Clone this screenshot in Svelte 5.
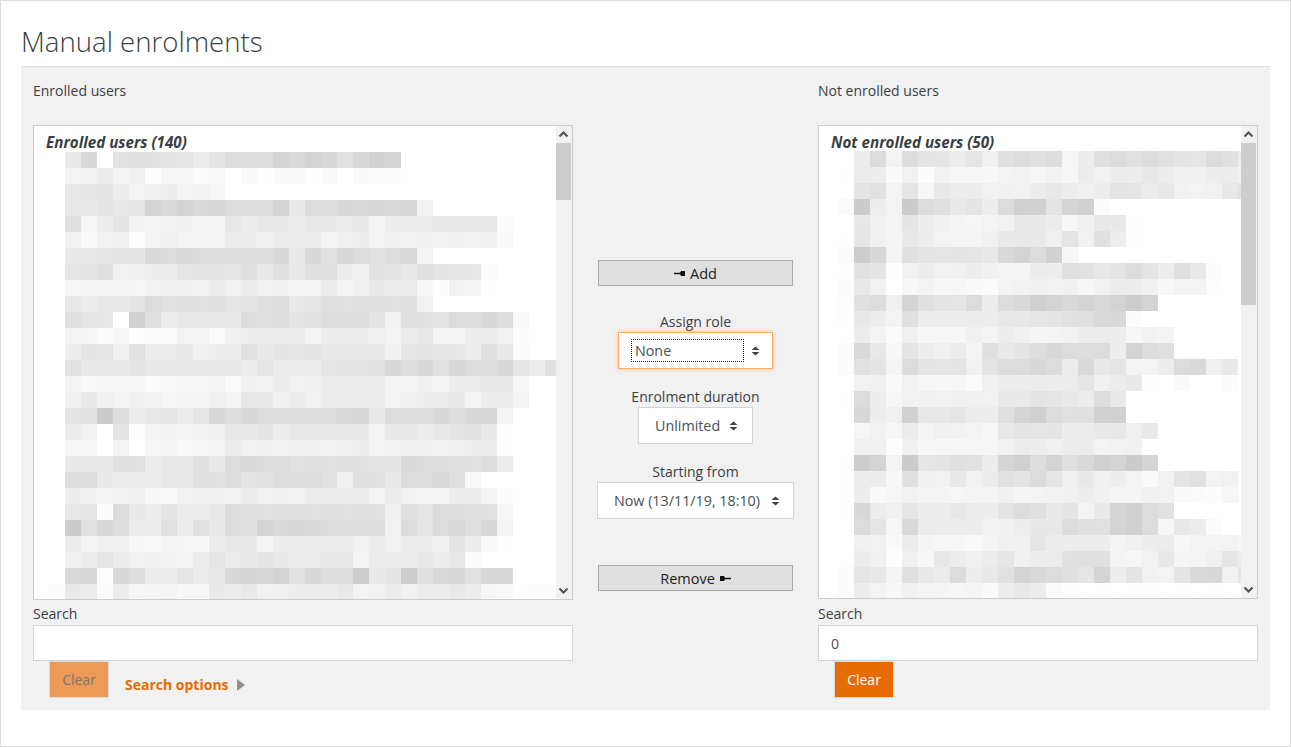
<script>
  const scale = { '0':'#cc','1':'#d0','2':'#d4','3':'#d8','4':'#dc','5':'#e0','6':'#e4','7':'#e8','8':'#ec','9':'#f0','a':'#f3','b':'#f6','c':'#f9','d':'#fc','e':'#fe','f':'#ff' };
  const tint = [[0,0,0],[1,0,-1],[0,1,1],[-1,0,1],[0,0,1],[1,1,0],[0,1,0]];
  function toCells(rows) {
    return rows.map((row, r) =>
      [...row].map((ch, i) => {
        const g = parseInt(scale[ch].slice(1), 16);
        const t = tint[(r * 3 + i * 5) % tint.length];
        const clamp = (v) => Math.min(255, v);
        return `rgb(${clamp(g + t[0])},${clamp(g + t[1])},${clamp(g + t[2])})`;
      })
    );
  }
  const leftRows = [
    'f73f5556686'+'4442323531'+'2e',
    'fa98a9dbbcc'+'fcdccdcfcc'+'d',
    'f7668a98a9b',
    'f7767623233'+'4442744333'+'339',
    'f5b869a99aa'+'787787787a'+'8887777c',
    'f9c99da9aaa'+'889888a98a'+'9999999c',
    'f7766634344'+'4443735345'+'43a',
    'f6659988666'+'6575755895'+'675667c',
    'fbaaab99998'+'9899aa8a97'+'88bd9ad',
    'f7877645555'+'6654765555'+'559',
    'f567f158777'+'7454654446'+'95564434c',
    'fabcbddcaac'+'98888a8889'+'a87aa889d',
    'f8669588798'+'8576667777'+'96667857c',
    'f5777677777'+'7868886665'+'34353443685',
    'facbbbccbba'+'c998998888'+'aa9a8877b',
    'f979a99baa9'+'a779898888'+'a9887a88a',
    'f6504876863'+'4344444337'+'4443433a',
    'f89f6da9a99'+'776877777a'+'7787657d',
    'fbbfafbacba'+'899999998a'+'9999988d',
    'f7775587757'+'4344555556'+'63445548',
    'f4478887755'+'4654445955'+'74435c',
    'f89a99bc999'+'989998888a'+'89aa88ad',
    'f76d4786887'+'4555555555'+'9564455b',
    'f0534885857'+'4523334444'+'9464353a',
    'f8a99bcabb8'+'77a8888898'+'988968cd',
    'f9868999a86'+'87678877a8'+'88787c',
    'f33d3488687'+'3232534407'+'60533533e',
    'd78c8baabb7'+'87998887a9'+'898878bcddd'
  ];
  const rightRows = [
    'f84a466869'+'5454b85454'+'566458',
    'e88c9d9bbb'+'a9b9b89887'+'899889',
    'e65a6b7889'+'9987898668'+'79a975',
    'c08a045768'+'411621cfff',
    'e79a689aba'+'9778b977e',
    'e69a78aaa9'+'77796958e',
    'd03a566667'+'3241bf',
    'e56e989989'+'aa88557646'+'857d',
    'd79fbabbcc'+'a9999b9889'+'baad',
    'd549256648'+'4312323202',
    'd78a588888'+'77665533d',
    'e8ac9bbb9a'+'89aa9888b9'+'a',
    'd37b6898a5'+'7643444824'+'5',
    'd56a466696'+'44348376aa'+'84397f',
    'f99c9bbbc9'+'888886987e'+'ecffdf',
    'e48b999999'+'77667847e',
    'e389177688'+'52145511e',
    'eb9b8a99ab'+'7666887797',
    'e99d9bbbbb'+'988988a99',
    'e02a066558'+'2142531202',
    'e88b599798'+'56469798ac'+'965a9d',
    'e8cb9aabaa'+'9aa9989aa9'+'9ccdbe',
    'e389688788'+'64576a7214'+'5',
    'e46b388889'+'9877455214'+'b78c',
    'f99c8abbca'+'9968888a98'+'8baaab',
    'e89d9b7898'+'6988555ab9'+'7aa968',
    'd67a578487'+'5234562869'+'a63396',
    'd8ab9aabac'+'878ceeeeee'+'eeeeee'
  ];
  const leftCells = toCells(leftRows);
  const rightCells = toCells(rightRows);
</script>

{#snippet updown()}
  <svg class="updown" width="9" height="10" viewBox="0 0 9 10" aria-hidden="true">
    <path d="M4.5 0.5 L8.5 4 H0.5 Z M4.5 9.5 L8.5 6 H0.5 Z" fill="#3f4448" />
  </svg>
{/snippet}

{#snippet scrollbar(cls)}
  <div class="scrollbar {cls}">
    <svg class="sb-arrow" width="15" height="17" viewBox="0 0 15 17" aria-hidden="true">
      <path d="M3.5 10.5 L7.5 6.5 L11.5 10.5" fill="none" stroke="#505050" stroke-width="2" />
    </svg>
    <div class="thumb"></div>
    <div class="sb-rest"></div>
    <svg class="sb-arrow" width="15" height="17" viewBox="0 0 15 17" aria-hidden="true">
      <path d="M3.5 6.5 L7.5 10.5 L11.5 6.5" fill="none" stroke="#505050" stroke-width="2" />
    </svg>
  </div>
{/snippet}

{#snippet mosaic(cells, cls)}
  <div class="mosaic {cls}">
    {#each cells as row}
      <div class="m-row">
        {#each row as c}
          <div class="m-cell" style="background:{c}"></div>
        {/each}
      </div>
    {/each}
  </div>
{/snippet}

<div class="page">
  <h2>Manual enrolments</h2>
  <div class="panel">
    <section class="col">
      <div class="col-title">Enrolled users</div>
      <div class="listbox left">
        <div class="list-main">
          <div class="list-head">Enrolled users (140)</div>
          {@render mosaic(leftCells, 'm-left')}
        </div>
        {@render scrollbar('sb-left')}
      </div>
      <div class="search-label">Search</div>
      <div class="input"></div>
      <div class="search-actions">
        <div class="btn-clear disabled"><span>Clear</span></div>
        <div class="options">Search options</div>
        <svg class="tri" width="8" height="12" viewBox="0 0 8 12" aria-hidden="true"><path d="M0 0 L8 6 L0 12 Z" fill="#8f8f8f" /></svg>
      </div>
    </section>

    <section class="mid">
      <div class="btn-move">
        <svg width="11" height="7" viewBox="0 0 11 7" aria-hidden="true"><path d="M0 2.7 H6 L7 1 H11 V6 H7 L6 4.2 H0 Z" fill="#111" /></svg>
        <span>Add</span>
      </div>
      <div class="field first">
        <div class="f-label">Assign role</div>
        <div class="sel focus">
          <span class="inner">None</span>
          {@render updown()}
        </div>
      </div>
      <div class="field">
        <div class="f-label">Enrolment duration</div>
        <div class="sel dur"><span>Unlimited</span>{@render updown()}</div>
      </div>
      <div class="field">
        <div class="f-label">Starting from</div>
        <div class="sel start"><span>Now (13/11/19, 18:10)</span>{@render updown()}</div>
      </div>
      <div class="btn-move remove">
        <span>Remove</span>
        <svg width="11" height="7" viewBox="0 0 11 7" aria-hidden="true"><path d="M11 2.7 H5 L4 1 H0 V6 H4 L5 4.2 H11 Z" fill="#111" /></svg>
      </div>
    </section>

    <section class="col col-right">
      <div class="col-title">Not enrolled users</div>
      <div class="listbox right">
        <div class="list-main">
          <div class="list-head">Not enrolled users (50)</div>
          {@render mosaic(rightCells, 'm-right')}
        </div>
        {@render scrollbar('sb-right')}
      </div>
      <div class="search-label">Search</div>
      <div class="input">0</div>
      <div class="search-actions">
        <div class="btn-clear"><span>Clear</span></div>
      </div>
    </section>
  </div>
</div>

<style>
  :global(body) { margin: 0; background: #fff; }
  .page {
    box-sizing: border-box;
    width: 1291px;
    height: 747px;
    border: 1px solid #dcdcdc;
    padding: 0 20px;
    font-family: "Open Sans", "Noto Sans", sans-serif;
    font-size: 14px;
    color: #3a3f44;
    overflow: hidden;
  }
  h2 {
    margin: 0;
    height: 66px;
    box-sizing: border-box;
    padding-top: 20px;
    font-weight: 300;
    font-size: 27.6px;
    line-height: 40px;
    color: #3a3f44;
    border-bottom: 1px solid #dee2e6;
  }
  .panel {
    box-sizing: border-box;
    height: 643px;
    width: 1249px;
    background: #f1f1f1;
    padding: 0 12px;
    display: grid;
    grid-template-columns: 540px 195px 440px;
    column-gap: 25px;
  }
  .col { display: flex; flex-direction: column; min-width: 0; }
  .col-title { height: 58px; line-height: 48px; }
  .listbox {
    box-sizing: border-box;
    display: flex;
    border: 1px solid #ccc;
    background: #fff;
    height: 475px;
    overflow: hidden;
  }
  .listbox.right { height: 474px; }
  .list-main { flex: 1; min-width: 0; overflow: hidden; }
  .list-head {
    font-weight: 700;
    font-style: italic;
    font-size: 15.2px;
    height: 26px;
    padding-left: 12px;
    line-height: 33px;
    white-space: nowrap;
  }
  .right .list-head { height: 25px; }
  .m-left { margin-left: 15px; }
  .m-right { margin-left: 19px; }
  .m-row { display: flex; height: 16px; }
  .m-cell { flex: none; width: 16px; height: 16px; }

  .scrollbar { flex: none; width: 16px; display: flex; flex-direction: column; background: #f1f1f1; }
  .sb-arrow { flex: none; display: block; height: 17px; }
  .thumb { flex: none; width: 15px; background: #cdcdcd; }
  .sb-left .thumb { height: 57px; }
  .sb-right .thumb { height: 162px; }
  .sb-rest { flex: 1; }

  .search-label { height: 25px; line-height: 27px; }
  .col-right .search-label { height: 26px; line-height: 29px; }
  .input {
    box-sizing: border-box;
    height: 36px;
    border: 1px solid #ced4da;
    background: #fff;
    padding-left: 12px;
    line-height: 36px;
    color: #495057;
  }
  .search-actions { display: flex; align-items: flex-start; padding-left: 16px; }
  .btn-clear {
    box-sizing: border-box;
    width: 60px;
    height: 37px;
    border: 1px solid #dcdcdc;
    background: #e76c00;
    color: #fff;
    text-align: center;
    line-height: 36px;
  }
  .btn-clear.disabled { background: #ed9a56; color: #7b7670; }
  .options {
    margin-left: 16px;
    margin-top: 5px;
    line-height: 38px;
    height: 38px;
    font-weight: 700;
    color: #e76c00;
  }
  .tri { margin-left: 8px; margin-top: 18px; }

  .mid { display: flex; flex-direction: column; align-items: center; padding-top: 193px; }
  .btn-move {
    box-sizing: border-box;
    width: 195px;
    height: 26px;
    background: #e0e0e0;
    border: 1px solid #aaa;
    color: #1c1c1c;
    display: flex;
    align-items: center;
    justify-content: center;
    gap: 5px;
    font-size: 14.5px;
    flex: none;
  }
  .field { display: flex; flex-direction: column; align-items: center; height: 75px; width: 197px; flex: none; }
  .field.first { margin-top: 25px; }
  .f-label { height: 21px; line-height: 21px; white-space: nowrap; flex: none; }
  .sel {
    box-sizing: border-box;
    height: 37px;
    background: #fff;
    border: 1px solid #ced4da;
    display: flex;
    align-items: center;
    color: #495057;
    white-space: nowrap;
    font-size: 14.3px;
    flex: none;
  }
  .updown { flex: none; }
  .focus {
    width: 155px;
    border-color: #fbad5f;
    box-shadow: 0 0 4px rgba(251, 173, 95, 0.7);
    padding-left: 12px;
    gap: 7px;
  }
  .inner {
    box-sizing: border-box;
    width: 113px;
    height: 23px;
    line-height: 21px;
    border: 1px dotted #222;
    padding-left: 3px;
  }
  .dur { width: 115px; padding-left: 16px; gap: 9px; }
  .start { width: 197px; padding-left: 16px; gap: 11px; }
  .remove { margin-top: 29px; }
</style>
